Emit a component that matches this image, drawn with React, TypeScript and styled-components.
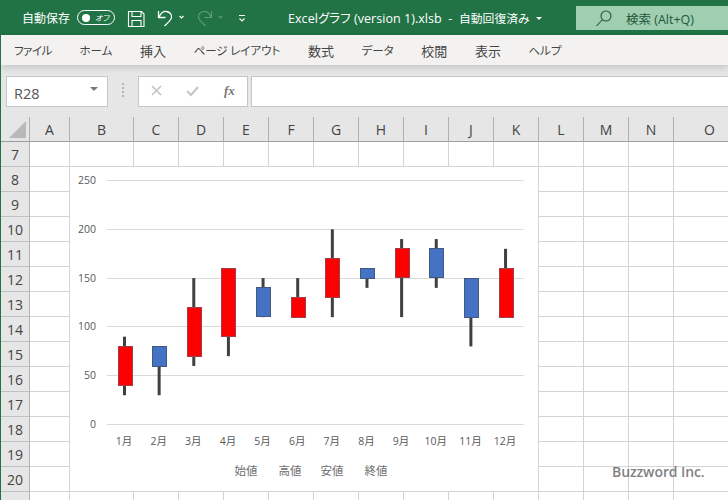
import React from "react";
import styled, { createGlobalStyle } from "styled-components";

const UI = `"Open Sans", "Noto Sans CJK JP", sans-serif`;
const CJK = `"Noto Sans CJK JP", "Open Sans", sans-serif`;

const Global = createGlobalStyle`
  html, body { margin: 0; padding: 0; background: #fff; }
  * { box-sizing: border-box; }
`;

const Page = styled.div`
  width: 728px;
  height: 500px;
  overflow: hidden;
  display: flex;
  flex-direction: column;
  border-left: 1px solid #217346;
  font-family: ${UI};
  font-feature-settings: "palt";
`;

const TitleBar = styled.header`
  height: 35px;
  flex: none;
  background: #217346;
  color: #fff;
  display: flex;
  align-items: center;
  font-size: 12px;
  padding-left: 21px;
  position: relative;
`;
const AutoSave = styled.span`
  font-family: ${CJK};
  width: 55px;
  flex: none;
`;
const Toggle = styled.span`
  width: 38px;
  height: 15px;
  flex: none;
  border: 1px solid #fff;
  border-radius: 8px;
  display: flex;
  align-items: center;
  padding-left: 4px;
  gap: 5px;
  font-family: ${CJK};
  font-size: 8px;
  font-style: italic;
  &::before {
    content: "";
    width: 8px;
    height: 8px;
    border-radius: 50%;
    background: #fff;
  }
`;
const QuickIcons = styled.svg`
  width: 130px;
  height: 35px;
  flex: none;
  margin-left: 12px;
`;
const DocName = styled.span`
  font-size: 12.5px;
  letter-spacing: 0.05px;
  white-space: pre;
  margin-left: 31px;
`;
const DocStatus = styled.span`
  font-family: ${CJK};
  font-size: 11.8px;
  white-space: pre;
`;
const TitleCaret = styled.span`
  width: 0;
  height: 0;
  flex: none;
  margin-left: 6px;
  margin-top: 2px;
  border-left: 3px solid transparent;
  border-right: 3px solid transparent;
  border-top: 3px solid #fff;
`;
const SearchBox = styled.div`
  position: absolute;
  left: 575px;
  right: 0;
  top: 6px;
  height: 24px;
  background: #9fcfb0;
  color: #24563c;
  display: flex;
  align-items: center;
  padding-left: 20px;
  gap: 14px;
  font-size: 12.5px;
`;

const Menu = styled.nav`
  height: 30px;
  flex: none;
  background: #f3f2f1;
  display: flex;
  align-items: center;
  padding-left: 13px;
  gap: 27.6px;
  font-family: ${CJK};
  color: #444;
  position: relative;
  z-index: 2;
  box-shadow: 0 2px 7px rgba(0, 0, 0, 0.16);
`;
const MenuItem = styled.span<{ $kana: boolean; $tight: boolean }>`
  white-space: pre;
  font-size: ${(p) => (p.$kana ? 11.5 : 13)}px;
  letter-spacing: ${(p) => (p.$tight ? -0.5 : 0)}px;
`;

const FormulaBar = styled.div`
  height: 52px;
  flex: none;
  background: #e6e6e6;
  padding: 11px 0 10px 5px;
  display: flex;
`;
const NameBox = styled.div`
  width: 102px;
  background: #fff;
  border: 1px solid #c6c6c6;
  display: flex;
  align-items: center;
  justify-content: space-between;
  padding: 3px 9px 0 7px;
  font-size: 14.5px;
  color: #555;
`;
const Caret = styled.span`
  width: 0;
  height: 0;
  border-left: 4px solid transparent;
  border-right: 4px solid transparent;
  border-top: 4px solid #777;
  margin-bottom: 8px;
`;
const Dots = styled.span`
  width: 30px;
  flex: none;
  display: flex;
  flex-direction: column;
  align-items: center;
  justify-content: center;
  gap: 2px;
  padding-bottom: 3px;
  & > i {
    width: 2px;
    height: 2px;
    background: #b4b4b4;
  }
`;
const Buttons = styled.div`
  width: 110px;
  flex: none;
  background: #fff;
  border: 1px solid #c6c6c6;
  display: flex;
  align-items: center;
  position: relative;
`;
const ButtonIcons = styled.svg`
  width: 80px;
  height: 29px;
  flex: none;
`;
const Fx = styled.span`
  font-family: "Liberation Serif", serif;
  font-style: italic;
  font-weight: 700;
  font-size: 13px;
  color: #777;
  margin-left: 5px;
  margin-top: -1px;
`;
const FormulaInput = styled.div`
  flex: 1;
  margin-left: 3px;
  background: #fff;
  border: 1px solid #c6c6c6;
  border-right: 0;
`;

const Sheet = styled.div`
  position: relative;
  flex: 1;
  display: grid;
  grid-template-columns: 29px 40px 64px repeat(12, 45px) 72px;
  grid-auto-rows: 25px;
  align-content: start;
  overflow: hidden;
`;
const Corner = styled.div`
  background: #e6e6e6;
  border-right: 1px solid #b0b0b0;
  border-bottom: 1px solid #9e9e9e;
  position: relative;
  &::after {
    content: "";
    position: absolute;
    right: 3px;
    bottom: 3px;
    border-style: solid;
    border-width: 0 0 17px 17px;
    border-color: transparent transparent #b9b9b9 transparent;
  }
`;
const ColHead = styled.div`
  background: #e6e6e6;
  border-right: 1px solid #b0b0b0;
  border-bottom: 1px solid #9e9e9e;
  display: flex;
  align-items: center;
  justify-content: center;
  font-size: 14px;
  color: #444;
  padding-top: 1px;
`;
const RowHead = styled.div`
  background: #e6e6e6;
  border-right: 1px solid #b0b0b0;
  border-bottom: 1px solid #c0c0c0;
  display: flex;
  align-items: center;
  justify-content: center;
  font-size: 14px;
  color: #444;
`;
const Cell = styled.div`
  border-right: 1px solid #d4d4d4;
  border-bottom: 1px solid #d4d4d4;
`;

const ChartFrame = styled.div`
  position: absolute;
  left: 69px;
  top: 50px;
  width: 468px;
  height: 324px;
  background: #fff;
`;
const ChartSvg = styled.svg`
  display: block;
  width: 468px;
  height: 324px;
`;
const ChartText = styled.text<{ $tone?: string; $size?: number }>`
  font-family: ${UI};
  font-size: ${(p) => p.$size ?? 10.5}px;
  fill: ${(p) => p.$tone ?? "#595959"};
`;
const Watermark = styled.div`
  position: absolute;
  left: 611px;
  top: 345px;
  font-size: 14px;
  font-weight: 600;
  color: rgba(90, 90, 90, 0.78);
  letter-spacing: -0.1px;
  white-space: nowrap;
`;

const MENU: [string, boolean, boolean][] = [
  ["ファイル", true, true],
  ["ホーム", true, false],
  ["挿入", false, false],
  ["ページ レイアウト", true, false],
  ["数式", false, false],
  ["データ", true, false],
  ["校閲", false, false],
  ["表示", false, false],
  ["ヘルプ", true, false],
];
const COLS = "ABCDEFGHIJKLMNO".split("");
const ROWS = Array.from({ length: 15 }, (_, i) => i + 7);
const DATA: [string, number, number, number, number][] = [
  ["1月", 40, 90, 30, 80],
  ["2月", 80, 80, 30, 60],
  ["3月", 70, 150, 60, 120],
  ["4月", 90, 160, 70, 160],
  ["5月", 140, 150, 110, 110],
  ["6月", 110, 150, 110, 130],
  ["7月", 130, 200, 110, 170],
  ["8月", 160, 160, 140, 150],
  ["9月", 150, 190, 110, 180],
  ["10月", 180, 190, 140, 150],
  ["11月", 150, 150, 80, 110],
  ["12月", 110, 180, 110, 160],
];
const y = (v: number) => 424.5 - v * 0.976;
const cx = (i: number) => 124.5 + i * 34.64;
const snap = (n: number) => Math.round(n - 0.5) + 0.5;

function Chart() {
  return (
    <ChartSvg viewBox="70 167 468 324">
      {[0, 50, 100, 150, 200, 250].map((v) => (
        <g key={v}>
          <line x1={107} x2={523.5} y1={snap(y(v))} y2={snap(y(v))} stroke="#d9d9d9" />
          <ChartText x={96} y={y(v) + 3.5} textAnchor="end">{v}</ChartText>
        </g>
      ))}
      {DATA.map(([m, o, h, l, c], i) => {
        const x = cx(i);
        const top = Math.max(o, c);
        const bottom = Math.min(o, c);
        const up = c > o;
        return (
          <g key={m}>
            <line x1={x} x2={x} y1={y(h)} y2={y(l)} stroke="#404040" strokeWidth={3} />
            <rect
              x={Math.round(x - 7) + 0.5}
              y={snap(y(top))}
              width={14}
              height={Math.round(y(bottom) - y(top))}
              fill={up ? "#ff0000" : "#4472c4"}
              stroke={up ? "#a03f4c" : "#41587f"}
              strokeWidth={1}
            />
            <ChartText x={x - 0.5} y={445} textAnchor="middle">{m}</ChartText>
          </g>
        );
      })}
      {[["始値", 246], ["高値", 290], ["安値", 332], ["終値", 376]].map(([t, x]) => (
        <ChartText key={t as string} x={x as number} y={475} textAnchor="middle" $size={11.5} $tone="#6e6e6e">
          {t}
        </ChartText>
      ))}
    </ChartSvg>
  );
}

export default function App() {
  return (
    <>
      <Global />
      <Page>
        <TitleBar>
          <AutoSave>自動保存</AutoSave>
          <Toggle>オフ</Toggle>
          <QuickIcons viewBox="0 0 130 35" fill="none" stroke="#fff">
            {/* save */}
            <path d="M1.5 11.5h13l2.5 2.5v12.5h-15.5z M5 11.5v5h9v-5 M5 26.5v-6h9v6" strokeWidth="1.1" />
            {/* undo */}
            <path d="M31.5 11v6.5h7 M32 17c2-4 5-6 7.5-5.5 3.5.5 5.5 3 5 6-.5 3-4 5.5-7 8.5" strokeWidth="1.3" />
            <path d="M52.5 16l2 2 2-2" strokeWidth="1.1" />
            {/* redo, disabled */}
            <path d="M84.5 11v6.5h-7 M84 17c-2-4-5-6-7.5-5.5-3.5.5-5.5 3-5 6 .5 3 4 5.5 7 8.5" strokeWidth="1.2" stroke="#5c9a78" />
            <path d="M91.5 16l2 2 2-2" strokeWidth="1.1" stroke="#5c9a78" />
            {/* customize */}
            <path d="M112 15.5h6 M112.5 18.5l2.5 2.5 2.5-2.5" strokeWidth="1.1" />
          </QuickIcons>
          <DocName>{"Excelグラフ (version 1).xlsb  -  "}</DocName>
          <DocStatus>自動回復済み</DocStatus>
          <TitleCaret />
          <SearchBox>
            <svg width="16" height="17" viewBox="0 0 16 17" fill="none" stroke="#24563c" strokeWidth="1.1">
              <circle cx="10" cy="6" r="5" />
              <path d="M6.5 9.5l-6 6.5" />
            </svg>
            <span>検索 (Alt+Q)</span>
          </SearchBox>
        </TitleBar>

        <Menu>
          {MENU.map(([m, kana, tight]) => (
            <MenuItem key={m} $kana={kana} $tight={tight}>{m}</MenuItem>
          ))}
        </Menu>

        <FormulaBar>
          <NameBox>
            R28
            <Caret />
          </NameBox>
          <Dots>
            <i />
            <i />
            <i />
            <i />
          </Dots>
          <Buttons>
            <ButtonIcons viewBox="0 0 80 29" fill="none">
              <path d="M13 9l9 9M22 9l-9 9" stroke="#c4c4c4" strokeWidth="1.6" />
              <path d="M48 14l4 4 7-8" stroke="#c4c4c4" strokeWidth="2" />
            </ButtonIcons>
            <Fx>fx</Fx>
          </Buttons>
          <FormulaInput />
        </FormulaBar>

        <Sheet>
          <Corner />
          {COLS.map((c) => (
            <ColHead key={c}>{c}</ColHead>
          ))}
          {ROWS.map((r) => (
            <React.Fragment key={r}>
              <RowHead>{r}</RowHead>
              {COLS.map((c) => (
                <Cell key={c} />
              ))}
            </React.Fragment>
          ))}
          <ChartFrame>
            <Chart />
          </ChartFrame>
          <Watermark>Buzzword Inc.</Watermark>
        </Sheet>
      </Page>
    </>
  );
}
